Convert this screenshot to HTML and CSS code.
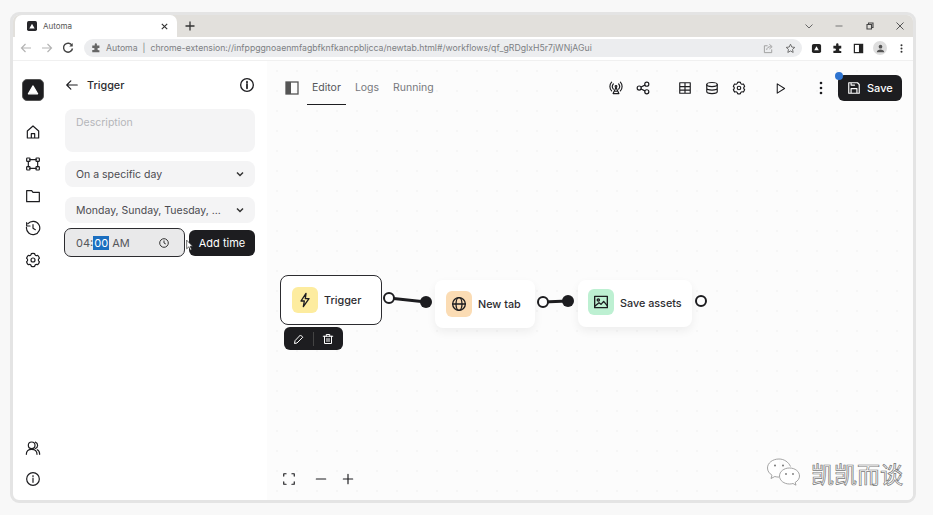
FILE: index.html
```html
<!DOCTYPE html>
<html lang="en">
<head>
    <meta charset="UTF-8">
    <title>Automa</title>
    <link rel="stylesheet" href="styles.css">
</head>
<body>
    <div class="window">
        <div class="tab-strip">
            <div class="tab">
                <svg class="tab-favicon" viewBox="0 0 12 12"><rect width="12" height="12" rx="2" fill="#26262a"/><path d="M6 3.2 9.2 9H2.8z" fill="#fff"/></svg>
                <span class="tab-title">Automa</span>
                <svg class="tab-close" viewBox="0 0 10 10"><path d="M2 2l6 6M8 2l-6 6" stroke="#333" stroke-width="1.3"/></svg>
            </div>
            <svg class="new-tab" viewBox="0 0 10 10"><path d="M5 .5v9M.5 5h9" stroke="#333" stroke-width="1.3"/></svg>
            <div class="window-controls">
                <svg viewBox="0 0 10 10"><path d="M1.5 3.500 5 7l3.500-3.500" fill="none" stroke="#666"/></svg>
                <svg viewBox="0 0 10 10"><path d="M1.5 5h7" stroke="#777"/></svg>
                <svg viewBox="0 0 10 10"><path d="M2 3.500h4.500V8H2zM3.500 3.500V2H8v4.500H6.500" fill="none" stroke="#444" stroke-width="1.1"/></svg>
                <svg viewBox="0 0 10 10"><path d="M1.500 1.500l7 7M8.500 1.500l-7 7" stroke="#555"/></svg>
            </div>
        </div>
        <div class="browser-bar">
            <svg class="nav-btn" viewBox="0 0 12 12"><path d="M11 6H1.500M5.500 2 1.500 6l4 4" fill="none" stroke="#b4b4b4" stroke-width="1.2"/></svg>
            <svg class="nav-btn" viewBox="0 0 12 12"><path d="M1 6h9.500M6.500 2l4 4-4 4" fill="none" stroke="#b4b4b4" stroke-width="1.2"/></svg>
            <svg class="nav-btn" viewBox="0 0 12 12"><path d="M10 3.500A4.500 4.500 0 1 0 10.500 6.500" fill="none" stroke="#444" stroke-width="1.4"/><path d="M10.700 1v3.400H7.300z" fill="#444"/></svg>
            <div class="omnibox">
                <svg class="omni-puzzle" viewBox="0 0 12 12"><path d="M4.500 1.500a1.300 1.300 0 0 1 2.600 0V3h3v3H9a1.300 1.300 0 0 0 0 2.600h1.100V11H1.500V8.500H3a1.300 1.300 0 0 0 0-2.600H1.500V3h3z" fill="#666"/></svg>
                <span class="omni-name">Automa</span>
                <span class="omni-sep">|</span>
                <span class="omni-url">chrome-extension://infppggnoaenmfagbfknfkancpbljcca/newtab.html#/workflows/qf_gRDgIxH5r7jWNjAGui</span>
                <svg class="omni-icon" viewBox="0 0 12 12"><path d="M5 3H1.500v7.500h8V7M4 7.500c.3-2.500 2-3.500 4.500-3.500M7 1.500 10 4 7 6.500" fill="none" stroke="#9a9a9a"/></svg>
                <svg class="omni-icon" viewBox="0 0 12 12"><path d="m6 1.300 1.400 3.100 3.300.4-2.500 2.200.7 3.300L6 8.700l-2.900 1.600.7-3.300L1.300 4.800l3.300-.4z" fill="none" stroke="#666"/></svg>
            </div>
            <div class="browser-actions">
                <svg viewBox="0 0 12 12"><rect x="1" y="1" width="10" height="10" rx="2" fill="#222"/><path d="M6 3.500 8.500 8h-5z" fill="#fff"/></svg>
                <svg viewBox="0 0 12 12"><path d="M4.500 1.500a1.300 1.300 0 0 1 2.600 0V3h3v3H9a1.300 1.300 0 0 0 0 2.600h1.100V11H1.500V8.500H3a1.300 1.300 0 0 0 0-2.600H1.500V3h3z" fill="#222"/></svg>
                <svg viewBox="0 0 12 12"><rect x="1.500" y="1.500" width="9" height="9" fill="none" stroke="#222" stroke-width="1.3"/><rect x="6.500" y="1.500" width="4" height="9" fill="#222"/></svg>
                <span class="profile"><svg viewBox="0 0 12 12"><circle cx="6" cy="4" r="2" fill="#555"/><path d="M2 10c0-2 2-3 4-3s4 1 4 3z" fill="#555"/></svg></span>
                <svg viewBox="0 0 12 12"><circle cx="6" cy="2.500" r="1.100" fill="#333"/><circle cx="6" cy="6" r="1.100" fill="#333"/><circle cx="6" cy="9.500" r="1.100" fill="#333"/></svg>
            </div>
        </div>

        <div class="app">
            <nav class="sidebar">
                <div class="logo"><svg viewBox="0 0 12 12"><path d="M6 2.500 10 9.300H2z" fill="#fff" stroke="#fff" stroke-linejoin="round"/></svg></div>
                <div class="side-nav">
                    <svg class="icon" viewBox="0 0 24 24"><path d="M3.500 10.500 12 3l8.500 7.500V21h-17zM9.500 21v-6.500h5V21"/></svg>
                    <svg class="icon" viewBox="0 0 24 24"><path d="M7 5.500h10M7 18.500h10M5 8v8M19 8v8"/><rect x="2.500" y="3" width="5" height="5" rx="1"/><rect x="16.500" y="3" width="5" height="5" rx="1"/><rect x="2.500" y="16" width="5" height="5" rx="1"/><rect x="16.500" y="16" width="5" height="5" rx="1"/></svg>
                    <svg class="icon" viewBox="0 0 24 24"><path d="M2.500 4h7.500l2 2.500h9.500V20.500h-19z"/></svg>
                    <svg class="icon" viewBox="0 0 24 24"><path d="M4.500 5.500A10 10 0 1 1 2.200 11M2.500 4v5h5M12 7v5.500l3.500 2"/></svg>
                    <svg class="icon" viewBox="0 0 24 24"><path d="M3.340 17a10 10 0 0 1-.98-2.330 3 3 0 0 0 0-5.340A10 10 0 0 1 4.870 5a3 3 0 0 0 4.630-2.680 10 10 0 0 1 5 0A3 3 0 0 0 19.130 5a10 10 0 0 1 2.500 4.330 3 3 0 0 0 0 5.340 10 10 0 0 1-2.500 4.330 3 3 0 0 0-4.630 2.680 10 10 0 0 1-5 0A3 3 0 0 0 4.870 19a10 10 0 0 1-1.530-2z"/><circle cx="12" cy="12" r="3"/></svg>
                </div>
                <div class="side-nav side-bottom">
                    <svg class="icon" viewBox="0 0 24 24"><circle cx="10" cy="8" r="5"/><path d="M2 21.500c0-5 3.500-7.500 8-7.500s8 2.500 8 7.500M15.500 3.200a5 5 0 0 1 0 9.500M18.500 14.500c2.200 1.200 3.500 3.500 3.500 7"/></svg>
                    <svg class="icon" viewBox="0 0 24 24"><circle cx="12" cy="12" r="9.500"/><path d="M12 11v6M12 7v1.500"/></svg>
                </div>
            </nav>

            <aside class="panel">
                <div class="panel-head">
                    <svg class="icon" viewBox="0 0 24 24"><path d="M21 12H3.500M10 5l-7 7 7 7"/></svg>
                    <span class="panel-title">Trigger</span>
                    <svg class="icon panel-info" viewBox="0 0 24 24"><circle cx="12" cy="12" r="9.500"/><path d="M12 11v6M12 7v1.500" stroke-width="2.600"/></svg>
                </div>
                <div class="field field-desc">Description</div>
                <div class="field field-select">
                    <span>On a specific day</span>
                    <svg class="chevron" viewBox="0 0 10 10"><path d="M2 3.500 5 6.500l3-3"/></svg>
                </div>
                <div class="field field-select">
                    <span>Monday, Sunday, Tuesday, ...</span>
                    <svg class="chevron" viewBox="0 0 10 10"><path d="M2 3.500 5 6.500l3-3"/></svg>
                </div>
                <div class="time-row">
                    <div class="time-input">
                        <span>04:<span class="selected">00</span> AM</span>
                        <svg class="time-clock" viewBox="0 0 12 12"><circle cx="6" cy="6" r="4.300"/><path d="M6 3.500V6l1.800 1"/></svg>
                    </div>
                    <div class="add-time">Add time</div>
                    <svg class="cursor" viewBox="0 0 12 18"><path d="M1 1v13l3.200-3 2.300 5 2-1-2.300-4.800H10z" fill="#fff" stroke="#222"/></svg>
                </div>
            </aside>

            <main class="canvas">
                <svg class="wires" viewBox="0 0 646 439">
                    <path d="M122 237 159 241"/>
                    <circle cx="159" cy="241" r="6" class="dot-filled"/>
                    <circle cx="122" cy="237" r="5" class="dot-open"/>
                    <path d="M276 241 301 240"/>
                    <circle cx="301" cy="240" r="6" class="dot-filled"/>
                    <circle cx="276" cy="241" r="5" class="dot-open"/>
                    <circle cx="434" cy="240" r="5" class="dot-open"/>
                </svg>

                <div class="topbar">
                    <svg class="sidebar-toggle" viewBox="0 0 14 14"><rect x="1" y="1" width="12" height="12" fill="none" stroke="#555" stroke-width="1.3"/><rect x="1" y="1" width="5" height="12" fill="#555"/></svg>
                    <div class="tabs">
                        <span class="view-tab active">Editor</span>
                        <span class="view-tab">Logs</span>
                        <span class="view-tab">Running</span>
                    </div>
                    <div class="tools">
                        <div class="tool-group">
                            <svg class="icon" viewBox="0 0 24 24"><circle cx="12" cy="9.500" r="1.500"/><path d="M12 11 7 21.500h10zM9 17.500h6M7.500 14a7 7 0 0 1 0-9M16.500 14a7 7 0 0 0 0-9M4.500 17a11 11 0 0 1 0-15M19.500 17a11 11 0 0 0 0-15"/></svg>
                            <svg class="icon" viewBox="0 0 24 24"><circle cx="5.500" cy="12" r="3.500"/><circle cx="18.500" cy="5.500" r="3.500"/><circle cx="18.500" cy="18.500" r="3.500"/><path d="M8.700 10.400l6.600-3.300M8.700 13.600l6.600 3.300"/></svg>
                        </div>
                        <div class="tool-group">
                            <svg class="icon" viewBox="0 0 24 24"><path d="M3 3h18v18H3zM3 9.500h18M3 15.500h18M12 3v18"/></svg>
                            <svg class="icon" viewBox="0 0 24 24"><ellipse cx="12" cy="6" rx="9" ry="3.500"/><path d="M3 6v12c0 2 4 3.500 9 3.500s9-1.500 9-3.500V6M3 12c0 2 4 3.500 9 3.500s9-1.500 9-3.500"/></svg>
                            <svg class="icon" viewBox="0 0 24 24"><path d="M3.340 17a10 10 0 0 1-.98-2.330 3 3 0 0 0 0-5.340A10 10 0 0 1 4.870 5a3 3 0 0 0 4.630-2.680 10 10 0 0 1 5 0A3 3 0 0 0 19.130 5a10 10 0 0 1 2.500 4.330 3 3 0 0 0 0 5.340 10 10 0 0 1-2.500 4.330 3 3 0 0 0-4.630 2.680 10 10 0 0 1-5 0A3 3 0 0 0 4.870 19a10 10 0 0 1-1.530-2z"/><circle cx="12" cy="12" r="3"/></svg>
                        </div>
                        <svg class="icon tool-play" viewBox="0 0 24 24"><path d="M6 3.500 19.500 12 6 20.500z"/></svg>
                        <svg class="tool-more" viewBox="0 0 16 16"><circle cx="8" cy="3" r="1.300"/><circle cx="8" cy="8" r="1.300"/><circle cx="8" cy="13" r="1.300"/></svg>
                        <div class="save-btn">
                            <span class="save-dot"></span>
                            <svg class="icon" viewBox="0 0 24 24"><path d="M3 3h15l3 3v15H3zM7 21v-8h10v8M7 3v4h6"/></svg>
                            <span>Save</span>
                        </div>
                    </div>
                </div>

                <div class="node node-trigger">
                    <span class="node-icon icon-yellow"><svg class="icon" viewBox="0 0 24 24"><path d="M13.500 2 6 13.500h5L9.500 22 18 10h-5.500z"/></svg></span>
                    <span>Trigger</span>
                </div>
                <div class="node-tools">
                    <svg class="icon" viewBox="0 0 24 24"><path d="M15.500 4.500l4 4L8 20l-5 1 1-5z"/></svg>
                    <span class="node-tools-sep"></span>
                    <svg class="icon" viewBox="0 0 24 24"><path d="M2.500 6.500h19M8.500 6.500V3h7v3.500M5 6.500V21h14V6.500M10 11v6M14 11v6"/></svg>
                </div>
                <div class="node node-tab">
                    <span class="node-icon icon-orange"><svg class="icon" viewBox="0 0 24 24"><circle cx="12" cy="12" r="9.500"/><ellipse cx="12" cy="12" rx="4.500" ry="9.500"/><path d="M2.500 12h19"/></svg></span>
                    <span>New tab</span>
                </div>
                <div class="node node-assets">
                    <span class="node-icon icon-green"><svg class="icon" viewBox="0 0 24 24"><rect x="2.500" y="3.500" width="19" height="17"/><circle cx="8" cy="9" r="1.700"/><path d="M3 18l6-5 3 2.500 4-4.500 5 6"/></svg></span>
                    <span class="node-assets-label">Save assets</span>
                </div>

                <div class="zoom-controls">
                    <svg class="icon" viewBox="0 0 24 24"><path d="M3 7V3h4M17 3h4v4M21 17v4h-4M7 21H3v-4"/></svg>
                    <svg class="icon zoom-minus" viewBox="0 0 24 24"><path d="M4 12h16"/></svg>
                    <svg class="icon" viewBox="0 0 24 24"><path d="M4 12h16M12 4v16"/></svg>
                </div>

                <div class="watermark">
                    <svg class="wechat" viewBox="0 0 36 30"><path d="M13 1C6.500 1 1.500 5 1.500 10c0 3 1.800 5.500 4.500 7.200L5 20.500l3.800-2c1.300.4 2.700.6 4.200.6 M24.500 8.500C22.500 4 18 1 13 1"/><path d="M23.500 10c-5.500 0-10 3.500-10 8s4.500 8 10 8c1.200 0 2.400-.2 3.500-.5l3 1.700-.8-2.800c2.600-1.500 4.300-3.800 4.300-6.400 0-4.500-4.500-8-10-8z"/><circle cx="9" cy="7.500" r="1"/><circle cx="17" cy="7.500" r="1"/><circle cx="20" cy="16" r=".9"/><circle cx="27" cy="16" r=".9"/></svg>
                    <span class="watermark-text">凯凯而谈</span>
                </div>
            </main>
        </div>
    </div>
</body>
</html>
```

FILE: styles.css
```css
* {
    box-sizing: border-box;
}

html, body {
    height: 100%;
}

body {
    margin: 0;
    padding: 12px 17px 12px 10px;
    background-color: #f8f8f8;
    font-family: 'Inter', 'Liberation Sans', sans-serif;
    color: #2b2b2f;
    overflow: hidden;
}

.window {
    display: flex;
    flex-direction: column;
    height: 100%;
    border: 3px solid #e4e4e4;
    border-radius: 9px;
    background: #fff;
    overflow: hidden;
}

.icon {
    width: 16px;
    height: 16px;
    fill: none;
    stroke: #1d1d20;
    stroke-width: 2;
    stroke-linejoin: round;
    stroke-linecap: round;
    flex: none;
}

/* browser chrome */
.tab-strip {
    display: flex;
    align-items: flex-end;
    height: 22px;
    background: #e2e0dc;
    flex: none;
}

.tab {
    display: flex;
    align-items: center;
    width: 162px;
    height: 22px;
    padding: 0 8px 0 12px;
    background: #fff;
    border-radius: 7px 7px 0 0;
    margin-left: 2px;
}

.tab-favicon {
    width: 10px;
    height: 10px;
}

.tab-title {
    margin-left: 6px;
    font-size: 8px;
    color: #555;
}

.tab-close {
    width: 9px;
    height: 9px;
    margin-left: auto;
}

.new-tab {
    width: 10px;
    height: 10px;
    margin: 0 0 6px 8px;
}

.window-controls {
    display: flex;
    align-items: center;
    gap: 20.5px;
    margin: 0 8px 6px auto;
}

.window-controls svg {
    width: 10px;
    height: 10px;
}

.browser-bar {
    display: flex;
    align-items: center;
    height: 24px;
    padding: 0 0 1px 7px;
    border-bottom: 1px solid #f0f0f0;
    flex: none;
}

.nav-btn {
    width: 12px;
    height: 12px;
    margin-right: 9px;
    flex: none;
}

.omnibox {
    display: flex;
    align-items: center;
    width: 718px;
    height: 18px;
    margin-left: 1px;
    padding: 0 6px 0 7px;
    background: #ecedef;
    border-radius: 9px;
    font-size: 8.7px;
    color: #7d7f83;
    white-space: nowrap;
    flex: none;
}

.omni-puzzle {
    width: 10px;
    height: 10px;
}

.omni-name {
    margin-left: 5px;
}

.omni-sep {
    margin: 0 5px;
}

.omni-url {
    flex: 1;
}

.omni-icon {
    width: 11px;
    height: 11px;
    margin-left: 11px;
}

.browser-actions {
    display: flex;
    align-items: center;
    gap: 10px;
    margin-left: 9px;
}

.browser-actions svg {
    width: 11px;
    height: 11px;
    display: block;
}

.profile {
    display: flex;
    align-items: center;
    justify-content: center;
    width: 14px;
    height: 14px;
    background: #dedede;
    border-radius: 50%;
    margin: 0 -1px;
}

/* app layout */
.app {
    display: flex;
    flex: 1;
    min-height: 0;
}

.sidebar {
    display: flex;
    flex-direction: column;
    align-items: center;
    width: 40px;
    padding: 18px 0 13px;
    flex: none;
}

.logo {
    display: flex;
    align-items: center;
    justify-content: center;
    width: 22px;
    height: 22px;
    margin-right: 1px;
    background: #1d1d20;
    border: 1px solid #555;
    border-radius: 5px;
}

.logo svg {
    width: 14px;
    height: 14px;
}

.side-nav {
    display: flex;
    flex-direction: column;
    gap: 16px;
    margin-top: 23px;
}

.side-nav .icon {
    stroke-width: 1.8;
}

.side-bottom {
    margin-top: auto;
    gap: 15px;
}

.panel {
    width: 214px;
    padding: 16px 12px 0;
    flex: none;
}

.panel-head {
    display: flex;
    align-items: center;
    height: 16px;
    gap: 8px;
    font-size: 10.8px;
    font-weight: 500;
}

.panel-head .icon:first-child {
    width: 14px;
    height: 14px;
}

.panel-info {
    margin-left: auto;
}

.field {
    display: flex;
    align-items: center;
    justify-content: space-between;
    background: #f4f4f5;
    border-radius: 8px;
    padding: 0 10px 0 11px;
    font-size: 10.5px;
    color: #4b4b50;
}

.field-desc {
    height: 43px;
    margin-top: 16px;
    padding-top: 7px;
    align-items: flex-start;
    color: #b4b6ba;
}

.field-select {
    height: 26px;
    margin-top: 10px;
}

.field-desc + .field-select {
    margin-top: 9px;
}

.chevron {
    width: 10px;
    height: 10px;
    fill: none;
    stroke: #333;
    stroke-width: 1.5;
}

.time-row {
    position: relative;
    display: flex;
    align-items: center;
    gap: 4px;
    margin-top: 5px;
    margin-left: -1px;
}

.time-input {
    display: flex;
    align-items: center;
    justify-content: space-between;
    width: 121px;
    height: 29px;
    padding: 0 14px 0 11px;
    background: #e9e9ea;
    border: 1.5px solid #2c2c30;
    border-radius: 7px;
    font-size: 11px;
    color: #55565a;
}

.selected {
    padding: 0 1px;
    background: #1c6fc0;
    color: #fff;
}

.time-clock {
    width: 12px;
    height: 12px;
    fill: none;
    stroke: #333;
}

.add-time {
    display: flex;
    align-items: center;
    justify-content: center;
    width: 66px;
    height: 26px;
    background: #1d1d20;
    border-radius: 6px;
    color: #fff;
    font-size: 11px;
}

.cursor {
    position: absolute;
    left: 122px;
    top: 11px;
    width: 8px;
    height: 13px;
}

/* canvas */
.canvas {
    position: relative;
    flex: 1;
    background-color: #fcfcfc;
    background-image: radial-gradient(#f6f6f6 1px, transparent 1px);
    background-size: 20px 20px;
}

.wires {
    position: absolute;
    inset: 0;
    width: 646px;
    height: 439px;
    fill: none;
    stroke: #1d1d20;
    stroke-width: 2.8;
}

.dot-filled {
    fill: #1d1d20;
    stroke: none;
}

.dot-open {
    fill: #fff;
    stroke-width: 2;
}

.topbar {
    position: absolute;
    top: 14px;
    left: 18px;
    right: 11px;
    display: flex;
    align-items: flex-start;
}

.sidebar-toggle {
    width: 14px;
    height: 14px;
    margin-top: 6px;
}

.tabs {
    display: flex;
    margin-left: 8px;
}

.view-tab {
    padding: 6px 5px 9px;
    margin-right: 4px;
    font-size: 10.5px;
    line-height: 14px;
    color: #77787c;
    border-bottom: 1px solid transparent;
}

.view-tab.active {
    color: #55565a;
    border-bottom-color: #1d1d20;
}

.tools {
    display: flex;
    align-items: center;
    height: 26px;
    margin-left: auto;
}

.tools .icon {
    width: 14px;
    height: 14px;
}

.tool-group {
    display: flex;
    align-items: center;
    gap: 13px;
    margin-right: 28px;
}

.tools .tool-play {
    width: 13px;
    height: 13px;
    margin-right: 26px;
}

.tool-more {
    width: 16px;
    height: 16px;
    fill: #1d1d20;
    margin-right: 9px;
}

.save-btn {
    position: relative;
    display: flex;
    align-items: center;
    gap: 6px;
    width: 64px;
    height: 26px;
    padding-left: 9px;
    background: #1d1d20;
    border-radius: 6px;
    color: #fff;
    font-size: 11px;
    font-weight: 500;
}

.save-btn .icon {
    stroke: #fff;
}

.save-dot {
    position: absolute;
    left: -3px;
    top: -3px;
    width: 8px;
    height: 8px;
    background: #2f74d0;
    border-radius: 50%;
}

.node {
    position: absolute;
    display: flex;
    align-items: center;
    gap: 6px;
    background: #fff;
    border-radius: 8px;
    padding-left: 11px;
    font-size: 10.8px;
    font-weight: 500;
    color: #2b2b2f;
    box-shadow: 0 4px 10px rgba(0, 0, 0, 0.06);
}

.node-trigger {
    left: 13px;
    top: 214px;
    width: 102px;
    height: 50px;
    border: 1.5px solid #2c2c30;
    box-shadow: none;
}

.node-tab {
    left: 168px;
    top: 219px;
    width: 100px;
    height: 48px;
}

.node-assets {
    left: 311px;
    top: 219px;
    width: 114px;
    height: 47px;
    padding: 0 0 3px 10px;
}

.node-assets-label {
    margin-top: 2px;
}

.node-icon {
    display: flex;
    align-items: center;
    justify-content: center;
    width: 26px;
    height: 26px;
    border-radius: 6px;
    flex: none;
}

.icon-yellow {
    background: #fdec9f;
}

.icon-orange {
    background: #fbdcb4;
}

.icon-green {
    background: #bdf0d2;
}

.node-tools {
    position: absolute;
    left: 17px;
    top: 266px;
    display: flex;
    align-items: center;
    gap: 8px;
    height: 23px;
    padding: 0 9px;
    background: #1d1d20;
    border-radius: 6px;
}

.node-tools .icon {
    stroke: #fff;
    width: 12px;
    height: 12px;
}

.node-tools-sep {
    width: 1px;
    height: 14px;
    background: #444;
}

.zoom-controls {
    position: absolute;
    left: 15px;
    bottom: 14px;
    display: flex;
    align-items: center;
    gap: 13px;
}

.zoom-controls .icon {
    width: 14px;
    height: 14px;
}

.zoom-minus {
    margin-left: 5px;
}

.watermark {
    position: absolute;
    right: 10px;
    bottom: 12px;
    display: flex;
    align-items: center;
    gap: 9px;
}

.wechat {
    width: 36px;
    height: 30px;
    fill: #fff;
    stroke: #8d8d8d;
    stroke-width: 0.8;
}

.wechat circle {
    fill: #777;
    stroke: none;
}

.watermark-text {
    font-family: 'Noto Sans CJK SC', sans-serif;
    font-size: 23px;
    line-height: 30px;
    color: #fff;
    -webkit-text-stroke: 0.7px #777;
}
```
